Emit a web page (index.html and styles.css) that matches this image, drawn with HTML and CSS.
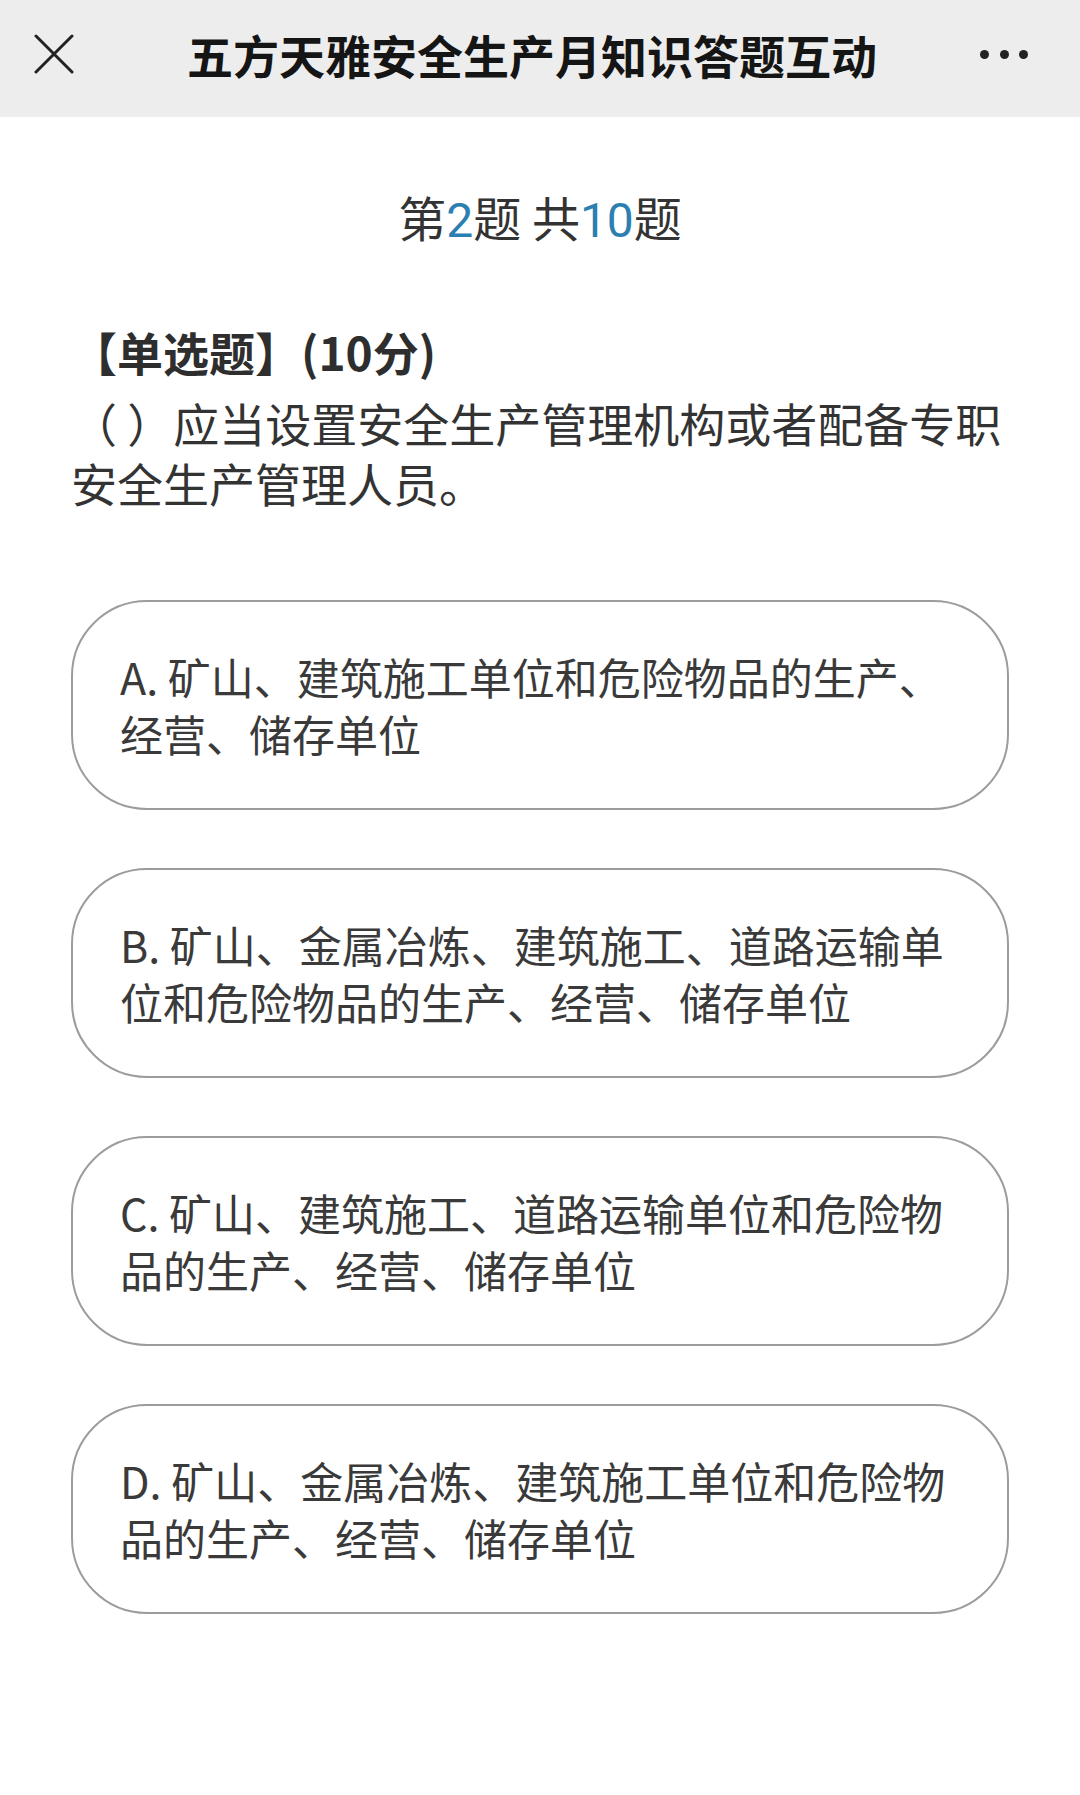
FILE: index.html
```html
<!DOCTYPE html>
<html lang="zh-CN">
<head>
<meta charset="utf-8">
<title>五方天雅安全生产月知识答题互动</title>
<link rel="stylesheet" href="styles.css">
</head>
<body>
<header class="topbar">
  <div class="close-btn">
    <svg width="40" height="40" viewBox="0 0 40 40"><path d="M2 2 L38 38 M38 2 L2 38" stroke="#222" stroke-width="3" fill="none" stroke-linecap="round"/></svg>
  </div>
  <div class="title">五方天雅安全生产月知识答题互动</div>
  <div class="more-btn"><span class="dot"></span><span class="dot"></span><span class="dot"></span></div>
</header>
<main class="content">
  <div class="progress">第<span class="num">2</span>题 共<span class="num">10</span>题</div>
  <div class="q-type">【单选题】(10分)</div>
  <div class="q-text">（ ）应当设置安全生产管理机构或者配备专职安全生产管理人员。</div>
  <div class="options">
    <div class="option"><div class="opt-text">A. 矿山、建筑施工单位和危险物品的生产、经营、储存单位</div></div>
    <div class="option"><div class="opt-text">B. 矿山、金属冶炼、建筑施工、道路运输单位和危险物品的生产、经营、储存单位</div></div>
    <div class="option"><div class="opt-text">C. 矿山、建筑施工、道路运输单位和危险物品的生产、经营、储存单位</div></div>
    <div class="option"><div class="opt-text">D. 矿山、金属冶炼、建筑施工单位和危险物品的生产、经营、储存单位</div></div>
  </div>
</main>
</body>
</html>
```

FILE: styles.css
```css
html, body {
  margin: 0;
  padding: 0;
  background: #ffffff;
}
body {
  width: 1080px;
  height: 1795px;
  overflow: hidden;
  font-family: "Noto Sans CJK SC", "Noto Sans", sans-serif;
  color: #333;
}
.topbar {
  height: 117px;
  box-sizing: border-box;
  padding: 0 52px 9px 34px;
  background: #ededed;
  display: flex;
  align-items: center;
}
.close-btn {
  width: 40px;
  height: 40px;
  display: flex;
}
.title {
  flex: 1;
  margin-left: 10px;
  text-align: center;
  font-size: 46px;
  font-weight: 600;
  color: #151515;
  line-height: 60px;
  white-space: nowrap;
}
.more-btn {
  width: 48px;
  display: flex;
  justify-content: space-between;
  align-items: center;
}
.dot {
  width: 9px;
  height: 9px;
  border-radius: 50%;
  background: #222;
}
.content {
  padding: 0 71px;
}
.progress {
  margin-top: 69px;
  text-align: center;
  font-size: 48px;
  line-height: 60px;
  color: #333;
}
.num {
  font-family: Roboto, "Noto Sans", sans-serif;
  color: #2b7fb1;
}
.q-type {
  margin-top: 70px;
  font-size: 46px;
  line-height: 60px;
  font-weight: 700;
  color: #2e2e2e;
}
.q-text {
  margin-top: 11px;
  font-size: 46px;
  line-height: 60px;
  color: #333;
}
.options {
  margin-top: 88px;
  display: flex;
  flex-direction: column;
  gap: 58px;
}
.option {
  height: 210px;
  box-sizing: border-box;
  border: 2px solid #9c9c9c;
  border-radius: 76px;
  padding: 0 48px 0 47px;
  display: flex;
  align-items: center;
}
.opt-text {
  width: 840px;
  font-size: 43px;
  line-height: 57px;
  color: #3a3a3a;
}
```
